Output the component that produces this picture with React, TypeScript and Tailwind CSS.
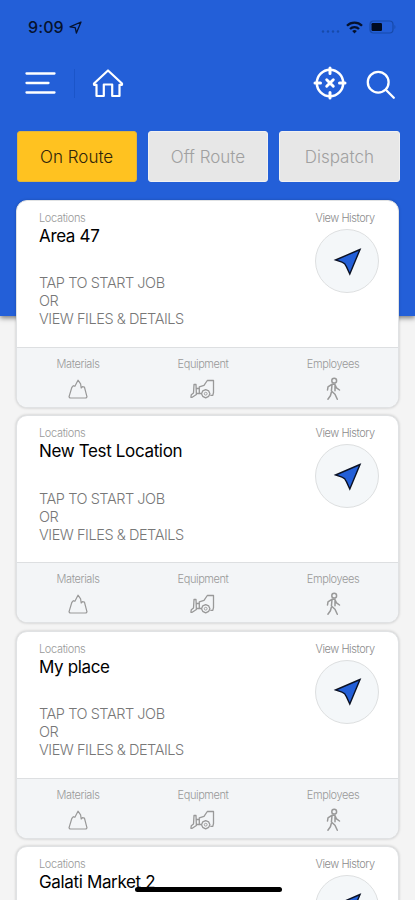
import React, { useState } from 'react';

interface Job {
  id: number;
  name: string;
}

const jobs: Job[] = [
  { id: 1, name: 'Area 47' },
  { id: 2, name: 'New Test Location' },
  { id: 3, name: 'My place' },
  { id: 4, name: 'Galati Market 2' },
];

const tabs = ['On Route', 'Off Route', 'Dispatch'];

const StatusBar: React.FC = () => (
  <div className="flex h-[54px] items-center justify-between pl-7 pr-[19px] text-[#06122d]">
    <div className="flex items-center gap-[5px]">
      <span className="text-[16px] font-medium leading-none tracking-[0.1px]">9:09</span>
      <svg className="h-[13px] w-[13px]" viewBox="0 0 13 13" fill="none" stroke="currentColor" strokeWidth="1.3" strokeLinejoin="round">
        <path d="M12 1 1 5.8l5.2.9L7.4 12Z" />
      </svg>
    </div>
    <div className="flex items-center">
      <svg className="mr-[6px] mt-[8px] h-[3px] w-[19px]" viewBox="0 0 19 3" fill="#174aaa">
        <circle cx="2" cy="1.5" r="1.2" />
        <circle cx="7" cy="1.5" r="1.2" />
        <circle cx="12" cy="1.5" r="1.2" />
        <circle cx="17" cy="1.5" r="1.2" />
      </svg>
      <svg className="mr-[6px] h-[13px] w-[17px]" viewBox="0 0 17 13" fill="none" stroke="currentColor" strokeWidth="2.3">
        <path d="M1 4.8a10.6 10.6 0 0 1 15 0M4 8a6.4 6.4 0 0 1 9 0" />
        <path d="m8.5 12.5-2.3-2.4a3.3 3.3 0 0 1 4.6 0Z" fill="currentColor" stroke="none" />
      </svg>
      <svg className="h-[14px] w-[27px]" viewBox="0 0 27 14" fill="none">
        <rect x="1" y="1" width="23" height="12" rx="3.5" stroke="#174aaa" strokeWidth="1.2" />
        <rect x="2.5" y="3" width="10.5" height="8" rx="1.2" fill="#000b20" />
        <path d="M25.5 5v4c1.2-.6 1.2-3.4 0-4Z" fill="#174aaa" />
      </svg>
    </div>
  </div>
);

const NavBar: React.FC = () => (
  <div className="flex h-[58px] items-center pl-[25px] pr-[19px] text-white">
    <button aria-label="Menu">
      <svg className="h-6 w-[31px]" viewBox="0 0 31 24" fill="none" stroke="currentColor" strokeWidth="2.3" strokeLinecap="round">
        <path d="M1.5 2.5h28M1.5 12h22M1.5 21.5h28" />
      </svg>
    </button>
    <span className="ml-[18px] h-[29px] w-px bg-[#1b55c9]" />
    <button aria-label="Home" className="ml-[17px]">
      <svg className="h-[30px] w-8" viewBox="0 0 32 30" fill="none" stroke="currentColor" strokeWidth="2.2" strokeLinejoin="round" strokeLinecap="round">
        <path d="m2 15.5 14-13 14 13v1.3h-2.5V28h-7.3V16.5h-8.4V28H4.5V16.8H2Z" />
      </svg>
    </button>
    <div className="ml-auto flex items-center">
      <button aria-label="Locate">
        <svg className="h-[34px] w-[34px]" viewBox="0 0 34 34" fill="none" stroke="currentColor" strokeWidth="2.5" strokeLinecap="round">
          <circle cx="17" cy="17" r="13.2" />
          <path d="M17 2v5.5M17 26.5V32M2 17h5.5M26.5 17H32" strokeWidth="3" />
          <path d="m13.7 13.7 6.6 6.6m0-6.6-6.6 6.6" strokeWidth="2.9" />
        </svg>
      </button>
      <button aria-label="Search" className="ml-[19px]">
        <svg className="mt-[3px] h-[30px] w-[30px]" viewBox="0 0 30 30" fill="none" stroke="currentColor" strokeWidth="2.3" strokeLinecap="round">
          <circle cx="12.2" cy="12.2" r="10.4" />
          <path d="m19.8 19.8 8 8" />
        </svg>
      </button>
    </div>
  </div>
);

const MaterialsIcon: React.FC = () => (
  <svg className="h-[22px] w-5" viewBox="0 0 20 22" fill="none" stroke="currentColor" strokeWidth="1.2" strokeLinejoin="round">
    <path d="m1 18.8 2.8-9.3 1.6-1.8 1.5.6L10 2.2l2.6 3.6.6 4.2 1.2-1.4 2 .4L19 18.8l-1 1.2H2Z" />
  </svg>
);

const EquipmentIcon: React.FC = () => (
  <svg className="h-[22px] w-[26px]" viewBox="0 0 26 22" fill="none" stroke="currentColor" strokeWidth="1.3" strokeLinejoin="round">
    <path d="M4 6.5h2l.4 10-4.2 2.8H.9l.4-2.6L3.5 15ZM6.3 10.5h3M6.3 15.5h4.9M9.3 15.5V8.8l4.7-1.4L17.3 2.5h6.2v12l-.7 2.8h-2.5" />
    <path d="m15.7 11.7 3 1.2 1.2 2.8-1.2 2.6-3 1.5-3-1.5-1.2-2.6 1.2-2.8Z" />
    <circle cx="15.7" cy="15.7" r="1.4" strokeWidth="0.9" />
  </svg>
);

const EmployeesIcon: React.FC = () => (
  <svg className="h-6 w-[15px]" viewBox="0 0 15 24" fill="none" stroke="currentColor" strokeWidth="1.5" strokeLinejoin="round" strokeLinecap="round">
    <circle cx="8.2" cy="3.7" r="2.4" />
    <path d="M1.5 13 2 9.8l3.8-2.5h3l1.7 3.5 3 2.2M6 8l-.6 6 3.6 3.3 2.3 5M9 8.5v5.2M5.3 15.5l-.9 3.3-2.5 3.4" />
  </svg>
);

const resources = [
  { label: 'Materials', Icon: MaterialsIcon },
  { label: 'Equipment', Icon: EquipmentIcon },
  { label: 'Employees', Icon: EmployeesIcon },
];

const JobCard: React.FC<{ job: Job }> = ({ job }) => (
  <article className="h-[208px] shrink-0 overflow-hidden rounded-[11px] border border-[#e0e2e4] bg-white shadow-[0_0_3px_rgba(0,0,0,0.2)]">
    <div className="flex h-[146px] justify-between pl-[22px] pr-[19px] pt-[10px]">
      <div>
        <p className="text-[11px] font-light leading-[14px] tracking-[-0.35px] text-[#999]">Locations</p>
        <h2 className="text-[17px] leading-[22px] tracking-[-0.35px] text-black">{job.name}</h2>
        <p className="mt-[27.3px] whitespace-nowrap text-[14.5px] font-light leading-[18px] tracking-[-0.45px] text-[#777]">
          TAP TO START JOB
          <br />
          OR
          <br />
          VIEW FILES &amp; DETAILS
        </p>
      </div>
      <div className="flex flex-col items-center">
        <button className="mr-[4px] whitespace-nowrap text-[11px] font-light leading-[14px] tracking-[-0.45px] text-[#8b8b8b]">View History</button>
        <button aria-label="Navigate" className="mt-[4px] flex h-16 w-16 items-center justify-center rounded-full border border-[#dddfe0] bg-[#f4f7f9]">
          <svg className="h-[29px] w-[29px]" viewBox="0 0 29 29" fill="#235fd8" stroke="#0b1225" strokeWidth="1.4">
            <path d="M27 2.5 2.5 13 9 15.2q3.2 1 4.3 4.2L16.8 27Z" />
          </svg>
        </button>
      </div>
    </div>
    <div className="grid h-[61px] grid-cols-[122px_128px_132px] border-t border-[#dddfe1] bg-[#f3f5f7] text-[#999]">
      {resources.map(({ label, Icon }) => (
        <div
          key={label}
          className="flex flex-col items-center pt-[9px] text-[11px] font-light leading-[14px] tracking-[-0.4px]"
        >
          {label}
          <span className="mt-[6px] flex h-6 items-center">
            <Icon />
          </span>
        </div>
      ))}
    </div>
  </article>
);

export default function App() {
  const [activeTab, setActiveTab] = useState('On Route');

  return (
    <div className="relative h-[900px] w-[415px] overflow-hidden bg-[#f4f4f4] font-[Inter,'Liberation_Sans',sans-serif]">
      <header className="h-[316px] bg-[#235fd8] shadow-[0_2px_5px_rgba(0,0,0,0.5)]">
        <StatusBar />
        <NavBar />
        <div className="mt-[19px] grid grid-cols-3 gap-[11px] pl-[16.5px] pr-[15.5px]">
          {tabs.map((tab) => (
            <button
              key={tab}
              onClick={() => setActiveTab(tab)}
              className={`h-[51px] rounded-[3px] border pt-[3px] text-[17px] font-light ${
                activeTab === tab
                  ? 'border-[#e0b53c] bg-[#ffc220] text-[#30250a]'
                  : 'border-[#f1f1f1] bg-[#e7e7e7] text-[#a0a0a0]'
              }`}
            >
              {tab}
            </button>
          ))}
        </div>
      </header>

      {/* Cards overlap the lower part of the header */}
      <main className="relative -mt-[116px] flex flex-col gap-[7.3px] px-4">
        {jobs.map((job) => (
          <JobCard key={job.id} job={job} />
        ))}
      </main>

      {/* Home indicator */}
      <div className="absolute bottom-[8px] left-[135px] h-[5px] w-[147px] rounded-full bg-black" />
    </div>
  );
}
